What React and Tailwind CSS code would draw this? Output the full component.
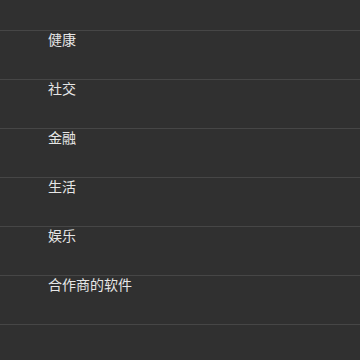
const items = ["健康", "社交", "金融", "生活", "娱乐", "合作商的软件"];

export default function App() {
  return (
    <div
      className="h-[360px] w-[360px] overflow-hidden bg-[#303030] pt-[30px]"
      style={{ fontFamily: '"Noto Sans CJK SC", "Noto Sans", sans-serif' }}
    >
      {items.map((label) => (
        <div
          key={label}
          className="h-[49px] border-t border-[#464646] pl-[48px] text-[14px] leading-[17px] text-[#e6e6e6]"
        >
          {label}
        </div>
      ))}
      <div className="border-t border-[#464646]" />
    </div>
  );
}
